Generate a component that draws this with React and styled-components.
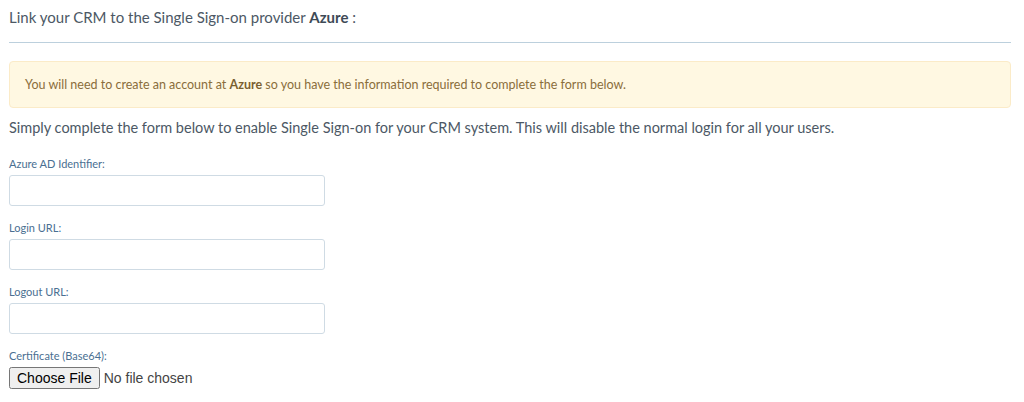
import styled, { createGlobalStyle } from 'styled-components';

const GlobalStyle = createGlobalStyle`
  body {
    margin: 0;
    background: #fff;
    font-family: Lato, "Open Sans", sans-serif;
  }
`;

const Page = styled.div`
  padding: 7px 13px 0 9px;
`;

const Heading = styled.p`
  margin: 0;
  font-size: 15px;
  line-height: 20px;
  color: #4c5865;
`;

const Strong = styled.b`
  font-weight: 700;
  color: #3e4a56;
`;

const Divider = styled.hr`
  margin: 15px 0 18px;
  border: 0;
  border-top: 1px solid #bcd0dd;
`;

const Alert = styled.div`
  padding: 14px 15px;
  background: #fff8e2;
  border: 1px solid #fbebc8;
  border-radius: 4px;
  font-size: 12.5px;
  line-height: 17px;
  color: #8a6d3b;
`;

const AlertStrong = styled.b`
  font-weight: 700;
  color: #7a5f30;
`;

const Intro = styled.p`
  margin: 10px 0 19px;
  font-size: 14.5px;
  line-height: 20px;
  color: #4c5865;
`;

const Field = styled.div`
  display: flex;
  flex-direction: column;
  gap: 4px;
  margin-bottom: 15px;
`;

const Label = styled.label`
  font-size: 11px;
  line-height: 14px;
  color: #4a6f92;
`;

const TextInput = styled.input`
  box-sizing: border-box;
  width: 316px;
  height: 31px;
  border: 1px solid #cfdbe4;
  border-radius: 3px;
  background: #fff;
  padding: 4px 8px;
  font-family: inherit;
`;

const FileInput = styled.input`
  font-family: "Liberation Sans", Arial, sans-serif;
  font-size: 14px;
  color: #444;
  margin: 0;
`;

const fields = ['Azure AD Identifier:', 'Login URL:', 'Logout URL:'];

export default function App() {
  return (
    <>
      <GlobalStyle />
      <Page>
        <Heading>
          Link your CRM to the Single Sign-on provider <Strong>Azure</Strong> :
        </Heading>
        <Divider />
        <Alert>
          You will need to create an account at <AlertStrong>Azure</AlertStrong> so you have the information required to complete the form below.
        </Alert>
        <Intro>
          Simply complete the form below to enable Single Sign-on for your CRM system. This will disable the normal login for all your users.
        </Intro>
        {fields.map((f) => (
          <Field key={f}>
            <Label>{f}</Label>
            <TextInput type="text" />
          </Field>
        ))}
        <Field>
          <Label>Certificate (Base64):</Label>
          <FileInput type="file" />
        </Field>
      </Page>
    </>
  );
}
